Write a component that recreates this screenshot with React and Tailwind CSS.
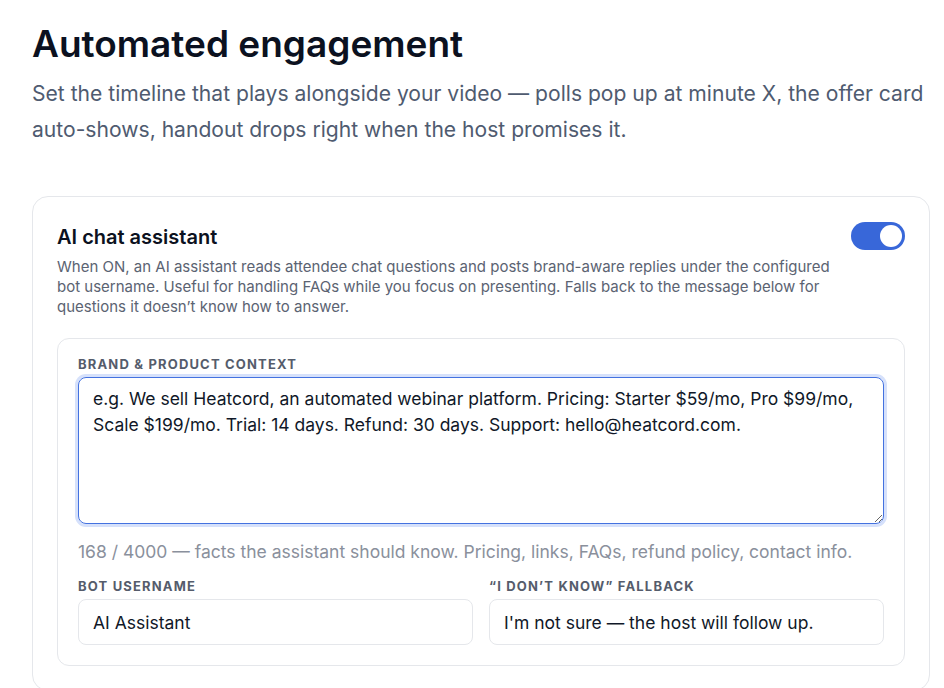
import { useState } from 'react';

const contextText =
  'e.g. We sell Heatcord, an automated webinar platform. Pricing: Starter $59/mo, Pro $99/mo, Scale $199/mo. Trial: 14 days. Refund: 30 days. Support: hello@heatcord.com.';

function Toggle({ on, onChange }) {
  return (
    <button
      type="button"
      onClick={() => onChange(!on)}
      className={`mt-px flex h-7 w-[54px] shrink-0 items-center rounded-full p-[3px] ${on ? 'justify-end bg-[#3867d9]' : 'justify-start bg-gray-300'}`}
    >
      <span className="block h-[22px] w-[22px] rounded-full bg-white" />
    </button>
  );
}

function Label({ children }) {
  return <p className="mb-[5px] text-[13px] leading-4 font-bold tracking-[0.09em] text-[#555c6b] uppercase">{children}</p>;
}

export default function App() {
  const [enabled, setEnabled] = useState(true);
  const [context, setContext] = useState(contextText);
  const [botName, setBotName] = useState('AI Assistant');
  const [fallback, setFallback] = useState("I'm not sure \u2014 the host will follow up.");

  return (
    <main className="min-h-screen bg-white pt-5 pr-[14px] pl-8 font-['Inter',sans-serif] text-gray-900">
      <h1 className="text-[37px] leading-[48px] font-semibold text-[#0b1120]">Automated engagement</h1>
      <p className="mt-2 text-[21.1px] leading-9 text-[#4f5b70]">
        Set the timeline that plays alongside your video — polls pop up at minute X, the offer card auto-shows, handout drops right when the host promises it.
      </p>

      <section className="mt-12 rounded-2xl border border-gray-200 px-6 pt-6 pb-6">
        <div className="flex items-start justify-between gap-4">
          <div className="flex-1">
            <h2 className="text-[20px] leading-8 font-semibold text-[#0b1120]">AI chat assistant</h2>
            <p className="mt-1 text-[15px] leading-5 text-[#5b6372]">
              When ON, an AI assistant reads attendee chat questions and posts brand-aware replies under the configured bot username. Useful for handling FAQs while you focus on presenting. Falls back to the message below for questions it doesn’t know how to answer.
            </p>
          </div>
          <Toggle on={enabled} onChange={setEnabled} />
        </div>

        <div className="mt-[21px] rounded-xl border border-gray-200 px-5 pt-[17px] pb-5">
          <Label>Brand &amp; Product Context</Label>
          <textarea
            value={context}
            onChange={(e) => setContext(e.target.value)}
            className="block h-[147px] w-full rounded-lg border border-[#4472e0] px-3.5 py-2 text-[17.5px] leading-[26px] text-gray-900 shadow-[0_0_0_3px_#d6e1fb] outline-none"
          />
          <p className="mt-4 text-[17.5px] leading-6 text-[#8a909c]">
            168 / 4000 — facts the assistant should know. Pricing, links, FAQs, refund policy, contact info.
          </p>

          <div className="mt-3.5 grid grid-cols-2 gap-4">
            <div>
              <Label>Bot username</Label>
              <input
                value={botName}
                onChange={(e) => setBotName(e.target.value)}
                className="block h-[46px] w-full rounded-lg border border-gray-200 px-3.5 text-[17.5px] text-gray-900 outline-none"
              />
            </div>
            <div>
              <Label>“I don’t know” fallback</Label>
              <input
                value={fallback}
                onChange={(e) => setFallback(e.target.value)}
                className="block h-[46px] w-full rounded-lg border border-gray-200 px-3.5 text-[17.5px] text-gray-900 outline-none"
              />
            </div>
          </div>
        </div>
      </section>
    </main>
  );
}
